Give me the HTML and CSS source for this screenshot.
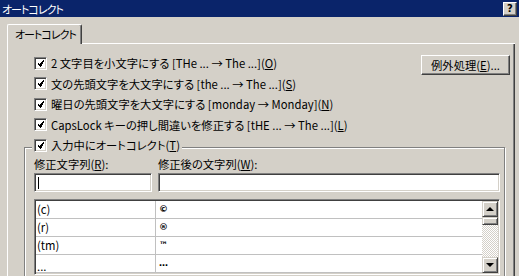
FILE: index.html
```html
<!DOCTYPE html>
<html lang="ja">
<head>
  <meta charset="UTF-8">
  <title>オートコレクト</title>
  <link rel="stylesheet" href="styles.css">
</head>
<body>

  <!-- タイトルバー -->
  <div class="titlebar">
    <span class="title">オートコレクト</span>
    <span class="help-btn">?</span>
  </div>

  <!-- タブ -->
  <div class="tabs">
    <div class="tab">オートコレクト</div>
    <div class="tab-rest"></div>
  </div>

  <div class="panel">
    <div class="top">
      <div class="options">
        <div class="opt">
          <span class="check"><svg width="7" height="7" shape-rendering="crispEdges"><path d="M0 2h1v3h1v1h1v1h1v-1h1v-2h1v-2h1v-2h-1v1h-1v1h-1v1h-1v1h-1v-1h-1v-1z" fill="#000"/></svg></span>
          <span>2 文字目を小文字にする [THe ... → The ...](<u>O</u>)</span>
        </div>
        <div class="opt">
          <span class="check"><svg width="7" height="7" shape-rendering="crispEdges"><path d="M0 2h1v3h1v1h1v1h1v-1h1v-2h1v-2h1v-2h-1v1h-1v1h-1v1h-1v1h-1v-1h-1v-1z" fill="#000"/></svg></span>
          <span>文の先頭文字を大文字にする [the ... → The ...](<u>S</u>)</span>
        </div>
        <div class="opt">
          <span class="check"><svg width="7" height="7" shape-rendering="crispEdges"><path d="M0 2h1v3h1v1h1v1h1v-1h1v-2h1v-2h1v-2h-1v1h-1v1h-1v1h-1v1h-1v-1h-1v-1z" fill="#000"/></svg></span>
          <span>曜日の先頭文字を大文字にする [monday → Monday](<u>N</u>)</span>
        </div>
        <div class="opt">
          <span class="check"><svg width="7" height="7" shape-rendering="crispEdges"><path d="M0 2h1v3h1v1h1v1h1v-1h1v-2h1v-2h1v-2h-1v1h-1v1h-1v1h-1v1h-1v-1h-1v-1z" fill="#000"/></svg></span>
          <span>CapsLock キーの押し間違いを修正する [tHE ... → The ...](<u>L</u>)</span>
        </div>
      </div>
      <button class="btn">例外処理(<u>E</u>)...</button>
    </div>

    <fieldset class="group">
      <legend class="opt legend">
        <span class="check"><svg width="7" height="7" shape-rendering="crispEdges"><path d="M0 2h1v3h1v1h1v1h1v-1h1v-2h1v-2h1v-2h-1v1h-1v1h-1v1h-1v1h-1v-1h-1v-1z" fill="#000"/></svg></span>
        <span>入力中にオートコレクト(<u>T</u>)</span>
      </legend>

      <div class="fields">
        <div class="lbl">修正文字列(<u>R</u>):</div>
        <div class="lbl">修正後の文字列(<u>W</u>):</div>
        <div class="input"><span class="caret"></span></div>
        <div class="input"></div>
      </div>

      <div class="list">
        <div class="rows">
          <div class="row"><span class="c1">(c)</span><span class="c2">©</span></div>
          <div class="row"><span class="c1">(r)</span><span class="c2">®</span></div>
          <div class="row"><span class="c1">(tm)</span><span class="c2">™</span></div>
          <div class="row"><span class="c1 low">...</span><span class="c2">…</span></div>
        </div>
        <div class="scrollbar">
          <div class="sb-btn"><span class="arrow-up"></span></div>
          <div class="sb-thumb"></div>
          <div class="sb-track"></div>
          <div class="sb-btn"><span class="arrow-down"></span></div>
        </div>
      </div>
    </fieldset>
  </div>

</body>
</html>
```

FILE: styles.css
```css
* { margin: 0; padding: 0; box-sizing: border-box; }
body {
  width: 519px;
  height: 276px;
  overflow: hidden;
  background: #d4d0c8;
  font-family: "Noto Sans CJK JP", sans-serif;
  font-size: 11.3px;
  font-feature-settings: "palt";
  line-height: 16px;
  color: #000;
}
u { text-decoration: underline; text-underline-offset: 1px; }

/* タイトルバー */
.titlebar {
  height: 17px;
  background: #0a246a;
  color: #fff;
  display: flex;
  align-items: center;
  justify-content: space-between;
  padding: 0 2px;
}
.title, .tab {
  font-size: 11px;
  letter-spacing: -1px;
  white-space: nowrap;
}
.help-btn {
  width: 14px;
  height: 14px;
  background: #d4d0c8;
  color: #000;
  font-family: "DejaVu Sans", sans-serif;
  font-weight: bold;
  font-size: 10px;
  line-height: 12px;
  text-align: center;
  border: 1px solid;
  border-color: #fff #404040 #404040 #fff;
  box-shadow: inset -1px -1px #808080;
}

/* タブ */
.tabs {
  display: flex;
  margin: 7px 4px 0 7px;
  height: 20px;
}
.tab {
  width: 75px;
  padding-left: 7px;
  line-height: 18px;
  border: 1px solid;
  border-bottom: none;
  border-color: #fff #404040 #fff #fff;
  border-radius: 2px 2px 0 0;
  box-shadow: inset -1px 0 #808080;
}
.tab-rest {
  flex: 1;
  border-bottom: 1px solid #fff;
}

.panel {
  margin: 0 4px 0 7px;
  height: 240px;
  border-left: 1px solid #fff;
  border-right: 1px solid #404040;
  box-shadow: inset -1px 0 #808080;
  padding: 9px 4px 0 26px;
}
.top {
  display: flex;
  justify-content: space-between;
  align-items: flex-start;
}
.opt {
  display: flex;
  align-items: center;
  gap: 4px;
  height: 20.5px;
  white-space: nowrap;
}
.check {
  width: 13px;
  height: 13px;
  flex: none;
  background: #fff;
  border: 1px solid;
  border-color: #808080 #fff #fff #808080;
  box-shadow: inset 1px 1px #404040, inset -1px -1px #d4d0c8;
  display: flex;
  align-items: center;
  justify-content: center;
}
.check svg { display: block; }
.btn {
  margin-top: 2px;
  width: 89px;
  height: 20px;
  font: inherit;
  background: #d4d0c8;
  border: 1px solid;
  border-color: #fff #404040 #404040 #fff;
  box-shadow: inset -1px -1px #808080;
}

/* グループ */
.group {
  margin: 2px 5px 0 -10px;
  border: 1px solid #808080;
  box-shadow: inset 1px 1px #fff, 1px 1px #fff;
  padding: 0 4px 10px 9px;
}
.legend {
  height: 20px;
  padding: 0 2px 4px;
  margin-left: -2px;
  background: #d4d0c8;
}
.fields {
  display: grid;
  grid-template-columns: 118px 1fr;
  column-gap: 6px;
  row-gap: 2px;
}
.lbl { line-height: 14px; }
.input {
  height: 19px;
  background: #fff;
  border: 1px solid;
  border-color: #808080 #fff #fff #808080;
  box-shadow: inset 1px 1px #404040, inset -1px -1px #d4d0c8;
  padding: 3px 0 0 3px;
}
.caret {
  display: block;
  width: 1px;
  height: 12px;
  background: #000;
}

/* 一覧 */
.list {
  margin-top: 7px;
  height: 76px;
  display: flex;
  background: #fff;
  border: 1px solid;
  border-color: #808080 #fff #fff #808080;
  box-shadow: inset 1px 1px #404040, inset -1px -1px #d4d0c8;
  padding: 1px;
}
.rows { flex: 1; }
.row {
  display: flex;
  height: 18px;
  border-bottom: 1px solid #c0c0c0;
  line-height: 17px;
}
.c1 {
  width: 120px;
  padding-left: 1px;
  border-right: 1px solid #c0c0c0;
}
.c1.low { line-height: 22px; }
.c2 {
  padding-left: 3px;
  font-family: "DejaVu Sans", sans-serif;
  font-weight: bold;
  font-size: 9px;
}
.scrollbar {
  width: 16px;
  display: flex;
  flex-direction: column;
}
.sb-btn, .sb-thumb {
  background: #d4d0c8;
  border: 1px solid;
  border-color: #d4d0c8 #404040 #404040 #d4d0c8;
  box-shadow: inset 1px 1px #fff, inset -1px -1px #808080;
}
.sb-btn {
  height: 16px;
  display: flex;
  align-items: center;
  justify-content: center;
}
.sb-thumb { height: 8px; }
.sb-track {
  flex: 1;
  background-color: #fff;
  background-image: conic-gradient(#d4d0c8 25%, #fff 0 50%, #d4d0c8 0 75%, #fff 0);
  background-size: 2px 2px;
}
.arrow-up {
  width: 0;
  height: 0;
  border-left: 4px solid transparent;
  border-right: 4px solid transparent;
  border-bottom: 4px solid #000;
}
.arrow-down {
  width: 0;
  height: 0;
  border-left: 4px solid transparent;
  border-right: 4px solid transparent;
  border-top: 4px solid #000;
}
```
